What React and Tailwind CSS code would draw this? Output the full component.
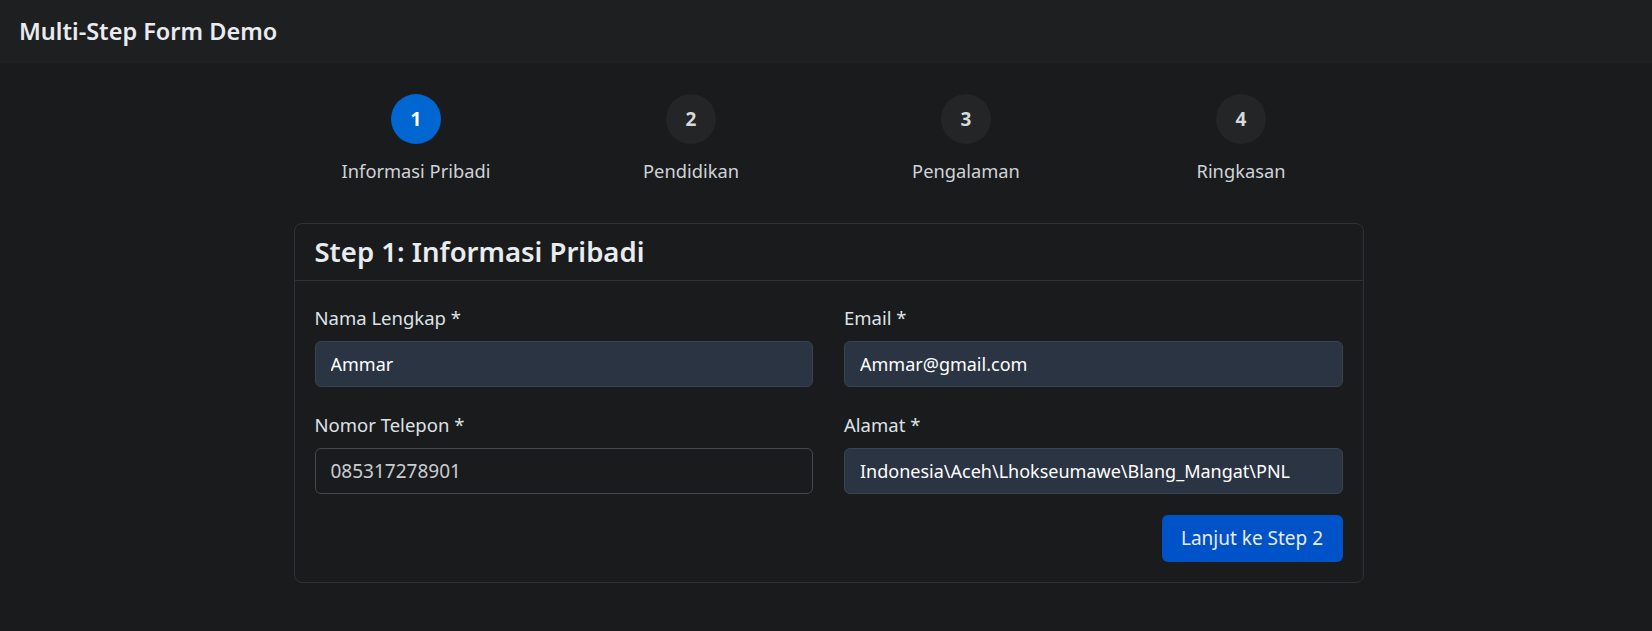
import { useState } from "react";

const steps = [
    { n: 1, label: "Informasi Pribadi" },
    { n: 2, label: "Pendidikan" },
    { n: 3, label: "Pengalaman" },
    { n: 4, label: "Ringkasan" },
];

function Field({ label, value, onChange, filled = true }) {
    return (
        <div className="flex flex-col">
            <label className="mb-[10px] text-[18.5px] leading-[26px] text-[#dee2e6]">{label}</label>
            <input
                value={value}
                onChange={(e) => onChange(e.target.value)}
                className={`h-[46px] w-full rounded-[6px] border px-[15px] focus:outline-none ${
                    filled
                        ? "border-[#3a4352] bg-[#2b3443] text-[18px] text-white"
                        : "border-[#45484d] bg-transparent text-[19px] text-[#c9cdd1]"
                }`}
            />
        </div>
    );
}

export default function App() {
    const [form, setForm] = useState({
        nama: "Ammar",
        email: "Ammar@gmail.com",
        telepon: "085317278901",
        alamat: "Indonesia\\Aceh\\Lhokseumawe\\Blang_Mangat\\PNL",
    });
    const current = 1;

    const set = (key) => (v) => setForm((f) => ({ ...f, [key]: v }));

    return (
        <div className="min-h-[631px] bg-[#1a1b1d] font-['Noto_Sans',sans-serif] text-[#dee2e6]">
            <header className="flex h-[63px] items-center bg-[#1e1f21] px-[19px]">
                <h1 className="text-[23.5px] font-semibold text-[#e9ecef]">Multi-Step Form Demo</h1>
            </header>

            <main className="flex justify-center pl-[5px] pt-[31px]">
                <div className="w-[1100px]">
                    {/* stepper */}
                    <div className="grid grid-cols-4">
                        {steps.map((s) => (
                            <div key={s.n} className="flex flex-col items-center">
                                <div
                                    className={`flex h-[50px] w-[50px] items-center justify-center rounded-full text-[19px] font-bold ${
                                        s.n === current ? "bg-[#0066d1] text-white" : "bg-[#232526] text-[#d6d9dc]"
                                    }`}
                                >
                                    {s.n}
                                </div>
                                <div className="mt-[14px] text-[18.3px] leading-[26px] text-[#cfd3d7]">{s.label}</div>
                            </div>
                        ))}
                    </div>

                    {/* card */}
                    <div className="mx-auto mt-[39px] w-[1070px] rounded-[8px] border border-[#2f3134] bg-[#1a1b1d]">
                        <div className="flex h-[57px] items-center border-b border-[#2f3134] px-[20px]">
                            <h2 className="text-[27.5px] font-semibold text-[#e9ecef]">Step 1: Informasi Pribadi</h2>
                        </div>
                        <div className="px-[20px] pb-[20px] pt-[24px]">
                            <div className="grid grid-cols-2 gap-x-[31px] gap-y-[25px]">
                                <Field label="Nama Lengkap *" value={form.nama} onChange={set("nama")} />
                                <Field label="Email *" value={form.email} onChange={set("email")} />
                                <Field label="Nomor Telepon *" value={form.telepon} onChange={set("telepon")} filled={false} />
                                <Field label="Alamat *" value={form.alamat} onChange={set("alamat")} />
                            </div>
                            <div className="mt-[21px] flex justify-end">
                                <button className="h-[47px] w-[181px] rounded-[6px] bg-[#0052c8] text-[19px] text-[#e9ecef]">
                                    Lanjut ke Step 2
                                </button>
                            </div>
                        </div>
                    </div>
                </div>
            </main>
        </div>
    );
}
